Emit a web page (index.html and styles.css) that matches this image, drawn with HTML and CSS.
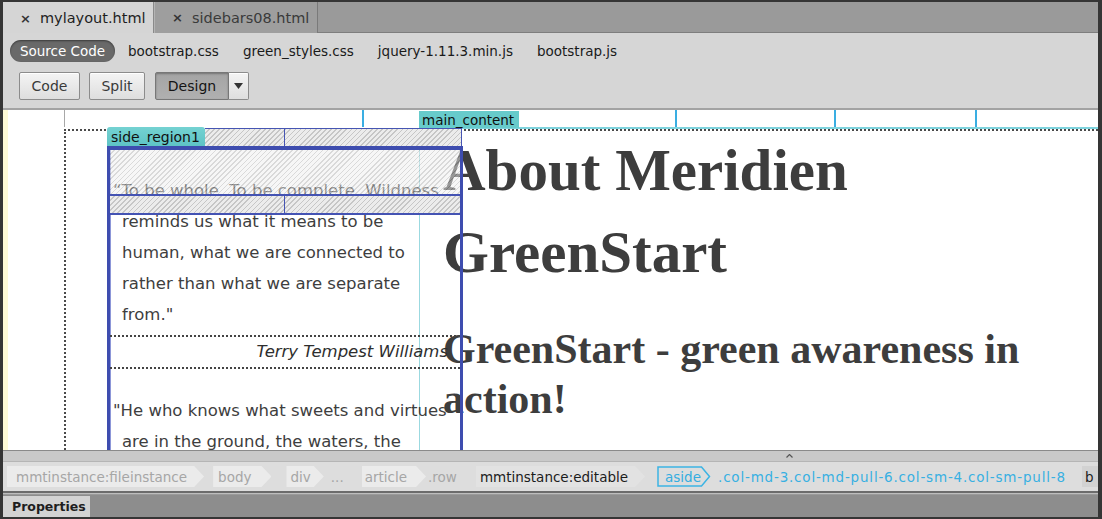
FILE: index.html
```html
<!DOCTYPE html>
<html>
<head>
<meta charset="utf-8">
<link rel="stylesheet" href="styles.css">
</head>
<body>
<div class="app">
  <div class="tabs">
    <div class="tab active"><span class="x">×</span>mylayout.html</div>
    <div class="tab"><span class="x">×</span>sidebars08.html</div>
  </div>
  <div class="toolbar">
    <div class="files">
      <span class="pill">Source Code</span>
      <span class="file first">bootstrap.css</span>
      <span class="file">green_styles.css</span>
      <span class="file">jquery-1.11.3.min.js</span>
      <span class="file">bootstrap.js</span>
    </div>
    <div class="views">
      <div class="btn btn-code">Code</div>
      <div class="btn btn-split">Split</div>
      <div class="btn-group">
        <div class="btn btn-design">Design</div>
        <div class="btn btn-drop"><svg width="9" height="6" viewBox="0 0 9 6"><path d="M0 0H9L4.5 6Z" fill="#333"/></svg></div>
      </div>
    </div>
  </div>
  <div class="design-view">
    <div class="gutter"></div>
    <div class="canvas">
      <div class="ruler">
        <span class="seg s1"></span>
        <span class="seg s2"></span>
        <span class="seg s3"></span>
        <span class="seg s4"></span>
        <span class="seg s5"></span>
      </div>
      <div class="container">
        <div class="row">
          <div class="main">
            <span class="tag-label main-label">main_content</span>
            <h1>About Meridien GreenStart</h1>
            <h2>GreenStart - green awareness in action!</h2>
          </div>
          <aside class="side">
            <div class="side-head">
              <span class="tag-label side-label">side_region1</span>
              <span class="strip"><span class="strip-cell"></span></span>
            </div>
            <div class="side-box">
              <div class="band band-a"></div>
              <div class="band band-b"><span class="band-cell"></span></div>
              <p class="quote">“To be whole. To be complete. Wildness<br>reminds us what it means to be<br>human, what we are connected to<br>rather than what we are separate<br>from."</p>
              <p class="author">Terry Tempest Williams</p>
              <p class="quote second">"He who knows what sweets and virtues<br>are in the ground, the waters, the<br>plants, the heavens, and how to come<br>at these enchantments, is the rich and<br>royal man."</p>
            </div>
          </aside>
        </div>
      </div>
    </div>
  </div>
  <div class="splitter"><svg class="grip" width="7" height="4" viewBox="0 0 7 4"><path d="M0.5 3.5L3.5 0.5L6.5 3.5" fill="none" stroke="#555" stroke-width="1.2"/></svg></div>
  <div class="tagbar">
    <span class="chip c1">mmtinstance:fileinstance</span>
    <span class="chip c2">body</span>
    <span class="chip c3">div</span>
    <span class="plain c4">...</span>
    <span class="chip c5">article</span>
    <span class="plain c6">.row</span>
    <span class="chip c7">mmtinstance:editable</span>
    <span class="aside-chip"><svg class="aside-outline" width="54" height="21" viewBox="0 0 54 21"><path d="M1 1H44.5L52.5 10.5L44.5 20H1Z" fill="none" stroke="#3cb4e4" stroke-width="1.5"/></svg>aside</span>
    <span class="cls">.col-md-3.col-md-pull-6.col-sm-4.col-sm-pull-8</span>
    <span class="chip c9">b</span>
  </div>
  <div class="props"><span class="ptab">Properties</span></div>
</div>
</body>
</html>
```
FILE: styles.css
```css
* { box-sizing: border-box; }
html, body { margin: 0; padding: 0; background: #333; }
.app {
  width: 1102px;
  height: 519px;
  background: #353535;
  padding: 2px 4px 2px 3px;
  display: flex;
  flex-direction: column;
  font-family: "DejaVu Sans", sans-serif;
  overflow: hidden;
}

/* tabs */
.tabs {
  height: 31px;
  flex: none;
  display: flex;
  background: #9a9a9a;
  border-bottom: 1px solid #7e7e7e;
}
.tab {
  width: 164px;
  height: 31px;
  display: flex;
  align-items: center;
  padding-left: 17px;
  font-size: 14.5px;
  color: #3a3a3a;
  background: #9e9e9e;
  border-left: 1px solid #b4b4b4;
  border-right: 1px solid #7a7a7a;
}
.tab.active {
  width: 151px;
  height: 32px;
  background: #d5d5d5;
  color: #1e1e1e;
  border-left: none;
  border-right: 1px solid #8a8a8a;
}
.tab .x {
  font-size: 13px;
  width: 20px;
  font-weight: bold;
  color: #333;
}

/* toolbar */
.toolbar {
  height: 77px;
  flex: none;
  background: #d6d6d6;
  border-bottom: 2px solid #a3a3a3;
  padding: 7px 0 0 7px;
}
.files {
  display: flex;
  align-items: center;
  height: 22px;
  font-size: 13.5px;
  color: #1a1a1a;
}
.pill {
  height: 22px;
  width: 105px;
  border-radius: 11px;
  background: #696969;
  color: #fff;
  display: flex;
  align-items: center;
  justify-content: center;
  box-shadow: inset 0 1px 2px rgba(0,0,0,0.45);
}
.file { margin-left: 24px; }
.file.first { margin-left: 13px; }
.views {
  display: flex;
  align-items: center;
  margin-top: 10px;
  padding-left: 9px;
  gap: 9px;
}
.btn {
  height: 28px;
  font-size: 14px;
  color: #3a3a3a;
  border: 1px solid #8c8c8c;
  border-radius: 2px;
  background: linear-gradient(#f4f4f4, #dedede);
  box-shadow: inset 0 1px 0 #fff;
  display: flex;
  align-items: center;
  justify-content: center;
}
.btn-code { width: 61px; }
.btn-split { width: 56px; }
.btn-group { display: flex; margin-left: 1px; }
.btn-design {
  width: 74px;
  background: linear-gradient(#a4a4a4, #b0b0b0);
  box-shadow: inset 0 1px 2px rgba(0,0,0,0.3);
  color: #141414;
  border-color: #777;
  border-radius: 2px 0 0 2px;
}
.btn-drop {
  width: 20px;
  border-left: none;
  border-radius: 0 2px 2px 0;
}

/* design view */
.design-view {
  height: 340px;
  flex: none;
  display: flex;
  background: #fff;
  overflow: hidden;
}
.gutter { width: 5px; flex: none; background: #fdf9d6; }
.canvas { flex: 1; position: relative; overflow: hidden; }
.ruler {
  height: 17px;
  margin-left: 56px;
  display: flex;
}
.seg { height: 17px; border-left: 2px solid #3aaee2; }
.seg.s1 { width: 298px; border-left: 1px solid #a8a8a8; }
.seg.s2 { width: 313px; }
.seg.s3 { width: 159px; }
.seg.s4 { width: 141px; }
.seg.s5 { flex: 1; }

.container {
  margin: 2px 0 0 56px;
  border-top: 2px dotted #4a4a4a;
  border-left: 2px dotted #4a4a4a;
  height: 400px;
}
.row {
  margin: -4px 0 0 41px;
  display: grid;
  grid-template-columns: 312px 24px 20px 1fr;
}

.tag-label {
  font-family: "DejaVu Sans", sans-serif;
  font-size: 13px;
  color: #111;
  background: #67cbcb;
  display: flex;
  align-items: center;
}

.main {
  grid-column: 2 / 5;
  grid-row: 1;
  position: relative;
  border-top: 2px solid #7fd4de;
  border-left: 1px solid #9bd9e0;
  padding-left: 23px;
  color: #3d3d3d;
  font-family: "Liberation Serif", serif;
}
.main-label {
  position: absolute;
  top: -18px;
  left: -1px;
  width: 100px;
  height: 17px;
  padding-left: 3px;
  font-size: 13.5px;
}
.main h1 {
  margin: 0;
  font-size: 59px;
  line-height: 82px;
  font-weight: bold;
  width: 560px;
}
.main h2 {
  margin: 31px 0 0;
  font-size: 42px;
  line-height: 50px;
  font-weight: bold;
  width: 600px;
}

.side {
  grid-column: 1 / 4;
  grid-row: 1;
  position: relative;
  z-index: 1;
}
.side-head { display: flex; height: 19px; }
.side-label {
  width: 98px;
  font-size: 14px;
  padding-left: 4px;
  border-radius: 3px 3px 0 0;
  background: linear-gradient(#74d2d2, #5ec3c5);
}
.strip, .band-b {
  background: repeating-linear-gradient(135deg, #ececec 0 2.5px, #c6c6c6 2.5px 3.6px);
}
.strip {
  flex: 1;
  margin-top: 1px;
  border-top: 1px solid #4655b3;
  border-right: 1px solid #4655b3;
  margin-right: 1px;
}
.strip-cell {
  display: block;
  width: 80px;
  height: 100%;
  border-right: 1px solid #4655b3;
}
.side-box {
  position: relative;
  border-top: 4px solid #3e4daf;
  border-left: 3px solid #3e4daf;
  border-right: 3px solid #3e4daf;
  box-shadow: inset 1px 0 0 #8c96d8;
  height: 400px;
  font-size: 16.5px;
  color: #3e3e3e;
}
.band { position: absolute; left: 0; right: 0; }
.band-a {
  top: 0;
  height: 46px;
  border-bottom: 2px solid #4453b3;
  background: repeating-linear-gradient(135deg, rgba(238,238,238,0.5) 0 2.5px, rgba(180,180,180,0.5) 2.5px 3.6px);
}
.band-b {
  top: 46px;
  height: 19px;
  border-bottom: 2px solid #4453b3;
}
.band-cell {
  display: block;
  width: 175px;
  height: 100%;
  border-right: 1px solid #4655b3;
}
.quote {
  margin: 25px 0 0;
  padding-left: 12px;
  text-indent: -9px;
  line-height: 31px;
  white-space: nowrap;
}
.author {
  margin: 5px 0 0;
  border-top: 2px dotted #444;
  border-bottom: 2px dotted #444;
  line-height: 30px;
  font-style: italic;
  text-align: right;
  padding-right: 12px;
  color: #2e2e2e;
}
.quote.second { margin-top: 26px; }

/* splitter */
.splitter {
  height: 12px;
  flex: none;
  background: #c9c9c9;
  border-top: 1px solid #8a8a8a;
  border-bottom: 1px solid #b5b5b5;
  position: relative;
}
.grip { position: absolute; left: 783px; top: 3px; }

/* tag selector */
.tagbar {
  height: 29px;
  flex: none;
  background: #dddddd;
  display: flex;
  align-items: center;
  font-size: 13.5px;
  white-space: nowrap;
  overflow: hidden;
  padding-left: 4px;
}
.tagbar > * { flex: none; }
.chip {
  height: 21px;
  display: flex;
  align-items: center;
  background: #ebebeb;
  color: #a6a6a6;
  clip-path: polygon(0 0, calc(100% - 10px) 0, 100% 50%, calc(100% - 10px) 100%, 0 100%);
}
.plain { color: #a6a6a6; }
.c1 { padding: 0 17px 0 9px; }
.c2 { margin-left: 9px; padding: 0 20px 0 5px; }
.c3 { margin-left: 15px; padding: 0 13px 0 4px; }
.c4 { margin-left: 7px; }
.c5 { margin-left: 18px; padding: 0 19px 0 3px; }
.c6 { margin-left: 2px; }
.c7 { margin-left: 19px; padding: 0 17px 0 4px; background: #e2e2e2; color: #1c1c1c; }
.aside-chip {
  position: relative;
  margin-left: 12px;
  height: 21px;
  width: 54px;
  padding-left: 8px;
  display: flex;
  align-items: center;
  color: #34ade0;
}
.aside-outline { position: absolute; left: 0; top: 0; }
.cls { margin-left: 7px; color: #38b0e2; letter-spacing: 0.8px; }
.c9 { margin-left: 16px; padding: 0 18px 0 3px; color: #1c1c1c; background: #d2d2d2; clip-path: none; }

/* properties */
.props {
  height: 26px;
  flex: none;
  background: #8d8d8d;
  border-top: 2px solid #6c6c6c;
  box-shadow: inset 0 1px 0 #bdbdbd, inset 0 2px 0 #9a9a9a;
  display: flex;
  padding-top: 3px;
}
.ptab {
  width: 87px;
  background: #d3d3d3;
  font-size: 12.5px;
  color: #1e1e1e;
  display: flex;
  align-items: center;
  padding-left: 9px;
  font-weight: bold;
}
```
